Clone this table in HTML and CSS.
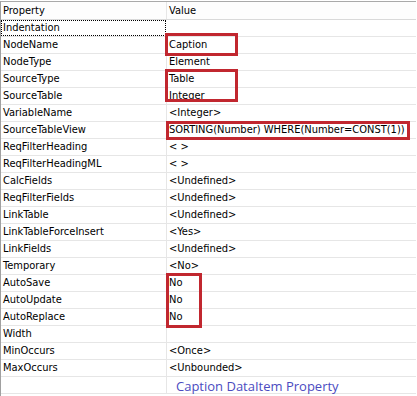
FILE: index.html
```html
<!DOCTYPE html>
<html lang="en">
<head>
    <meta charset="UTF-8">
    <title>Caption DataItem Property</title>
    <link rel="stylesheet" href="styles.css">
</head>
<body>
    <div class="grid">
        <div class="row head">
            <div class="prop">Property</div>
            <div class="val">Value</div>
        </div>
        <div class="row"><div class="prop focus">Indentation</div><div class="val"></div></div>
        <div class="row"><div class="prop">NodeName</div><div class="val">Caption</div></div>
        <div class="row"><div class="prop">NodeType</div><div class="val">Element</div></div>
        <div class="row"><div class="prop">SourceType</div><div class="val">Table</div></div>
        <div class="row"><div class="prop">SourceTable</div><div class="val">Integer</div></div>
        <div class="row"><div class="prop">VariableName</div><div class="val">&lt;Integer&gt;</div></div>
        <div class="row"><div class="prop">SourceTableView</div><div class="val">SORTING(Number) WHERE(Number=CONST(1))</div></div>
        <div class="row"><div class="prop">ReqFilterHeading</div><div class="val">&lt; &gt;</div></div>
        <div class="row"><div class="prop">ReqFilterHeadingML</div><div class="val">&lt; &gt;</div></div>
        <div class="row"><div class="prop">CalcFields</div><div class="val">&lt;Undefined&gt;</div></div>
        <div class="row"><div class="prop">ReqFilterFields</div><div class="val">&lt;Undefined&gt;</div></div>
        <div class="row"><div class="prop">LinkTable</div><div class="val">&lt;Undefined&gt;</div></div>
        <div class="row"><div class="prop">LinkTableForceInsert</div><div class="val">&lt;Yes&gt;</div></div>
        <div class="row"><div class="prop">LinkFields</div><div class="val">&lt;Undefined&gt;</div></div>
        <div class="row"><div class="prop">Temporary</div><div class="val">&lt;No&gt;</div></div>
        <div class="row"><div class="prop">AutoSave</div><div class="val">No</div></div>
        <div class="row"><div class="prop">AutoUpdate</div><div class="val">No</div></div>
        <div class="row"><div class="prop">AutoReplace</div><div class="val">No</div></div>
        <div class="row"><div class="prop">Width</div><div class="val"></div></div>
        <div class="row"><div class="prop">MinOccurs</div><div class="val">&lt;Once&gt;</div></div>
        <div class="row"><div class="prop">MaxOccurs</div><div class="val">&lt;Unbounded&gt;</div></div>
        <div class="row"><div class="prop"></div><div class="val"><span class="caption">Caption DataItem Property</span></div></div>

        <!-- red annotation boxes -->
        <div class="mark mark-name"></div>
        <div class="mark mark-source"></div>
        <div class="mark mark-view"></div>
        <div class="mark mark-auto"></div>
    </div>
</body>
</html>
```

FILE: styles.css
```css
body {
    margin: 0;
    background: #ffffff;
    font-family: "DejaVu Sans Condensed", "DejaVu Sans", sans-serif;
    font-stretch: condensed;
    font-size: 11px;
    color: #000000;
}
.grid {
    position: relative;
    margin-top: 1px;
    border-top: 1px solid #a9a9a9;
    border-left: 1px solid #a0a0a0;
    width: 416px;
    height: 395px;
    box-sizing: border-box;
}
.row {
    display: flex;
    height: 17px;
    border-bottom: 1px solid #e6e6e6;
    line-height: 16px;
    box-sizing: border-box;
}
.head {
    height: 17px;
    line-height: 17px;
    border-bottom: 1px solid #d9d9d9;
    background: #fdfdfd;
    box-sizing: content-box;
}
.prop {
    width: 166px;
    flex-shrink: 0;
    padding-left: 2px;
    border-right: 1px solid #e6e6e6;
    box-sizing: border-box;
    white-space: nowrap;
}
.val {
    flex: 1;
    padding-left: 2px;
    white-space: nowrap;
}
.focus {
    border: 1px dotted #000000;
    width: 165px;
    margin-right: 1px;
    padding-left: 1px;
    line-height: 14px;
}
.caption {
    font-family: "Open Sans", sans-serif;
    font-stretch: normal;
    font-size: 13px;
    color: #4b4bbf;
    padding-left: 7px;
    position: relative;
    top: 1px;
}
.mark {
    position: absolute;
    border: 3px solid #c1272f;
    box-sizing: border-box;
}
.mark-name { left: 164px; top: 31px; width: 73px; height: 23px; }
.mark-source { left: 164px; top: 67px; width: 73px; height: 33px; }
.mark-view { left: 165px; top: 119px; width: 244px; height: 19px; }
.mark-auto { left: 165px; top: 271px; width: 36px; height: 55px; }
```
